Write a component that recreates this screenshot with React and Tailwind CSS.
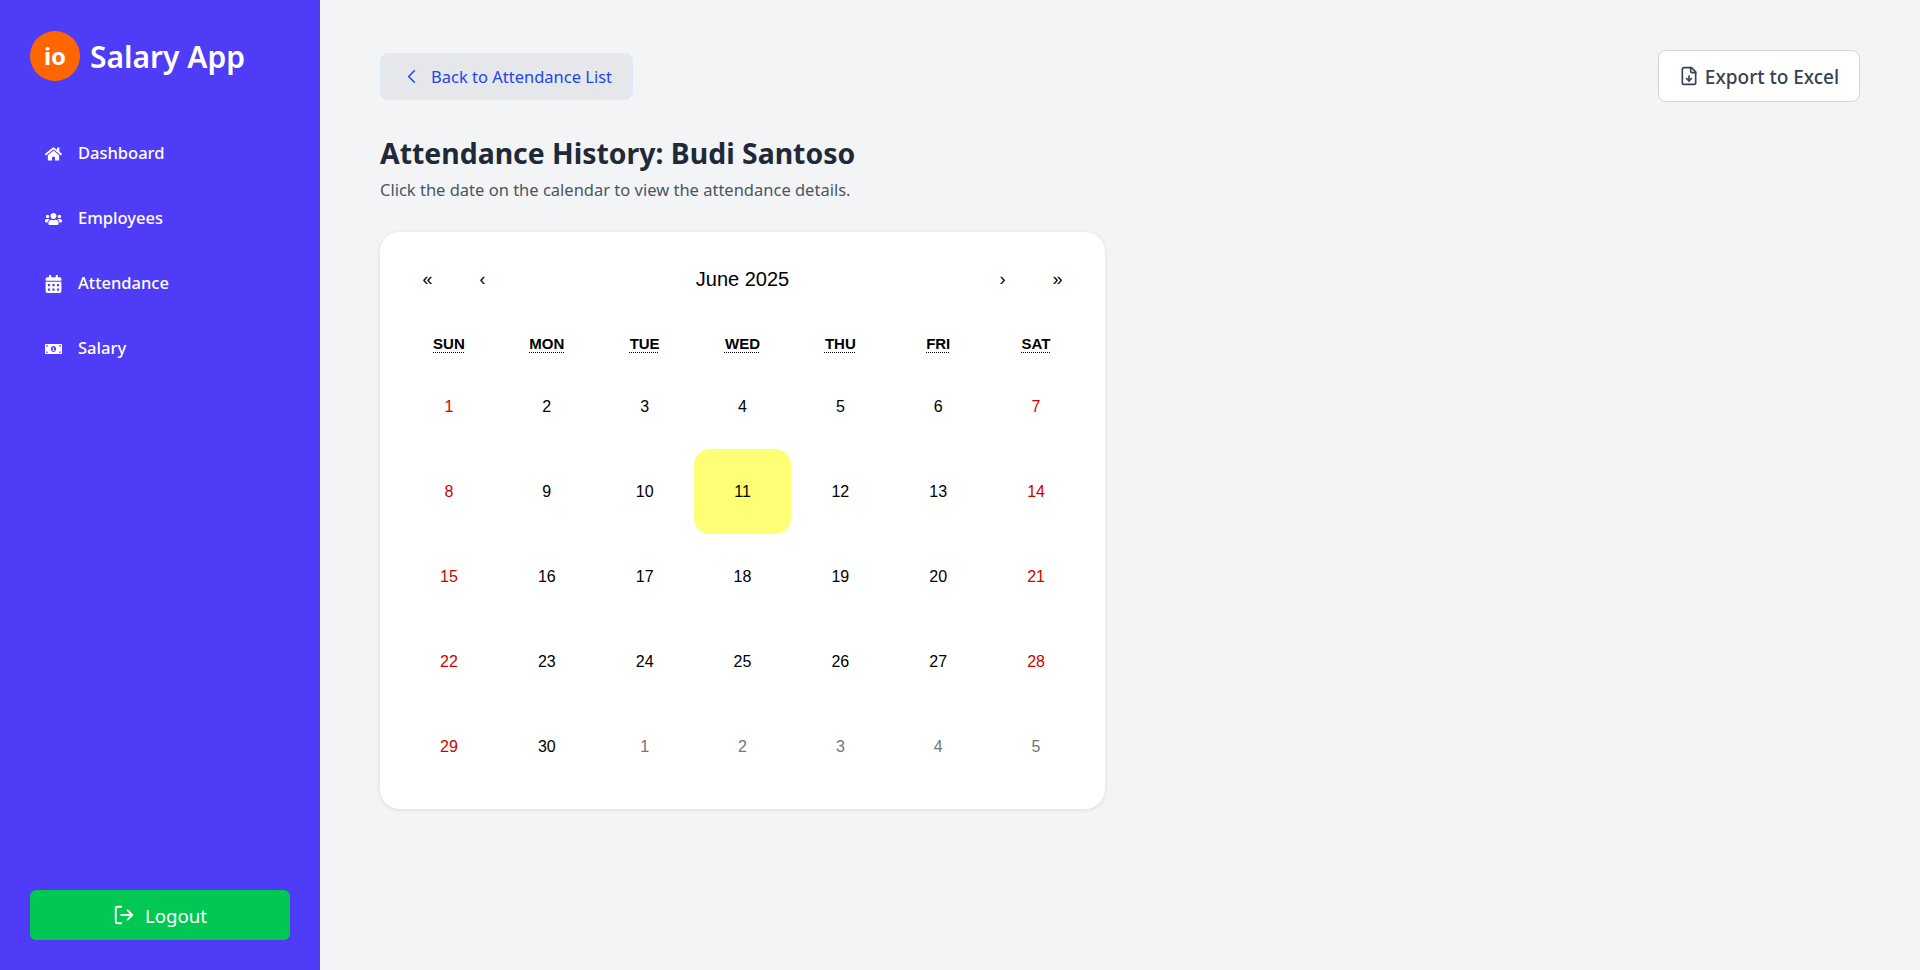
import React from "react";
import { FaHome, FaUsers, FaCalendarAlt, FaMoneyBillAlt } from "react-icons/fa";
import { FiChevronLeft, FiLogOut } from "react-icons/fi";
import { LuFileDown } from "react-icons/lu";

const nav = [
  ["Dashboard", FaHome],
  ["Employees", FaUsers],
  ["Attendance", FaCalendarAlt],
  ["Salary", FaMoneyBillAlt],
];
const weekdays = ["SUN", "MON", "TUE", "WED", "THU", "FRI", "SAT"];
const days = [];
for (let i = 1; i <= 30; i++) days.push({ d: i, out: false });
for (let i = 1; i <= 5; i++) days.push({ d: i, out: true });

function dayClass(idx, cell) {
  if (cell.out) return "text-[#757575]";
  if (idx % 7 === 0 || idx % 7 === 6) return "text-[#d10000]";
  return "text-black";
}

export default function App() {
  return (
    <div className="flex h-[970px] w-full bg-[#f3f4f6] overflow-hidden font-['Noto_Sans','Open_Sans',sans-serif]">
      <aside className="flex w-[320px] shrink-0 flex-col bg-[#4f3cf7] px-[30px] pt-[30px] pb-[30px] text-white">
        <div className="flex items-center gap-[10px]">
          <div className="flex h-[50px] w-[50px] items-center justify-center rounded-full bg-[#ff6600] text-[24px] font-bold">io</div>
          <div className="pt-[2px] text-[30px] font-semibold leading-[50px]">Salary App</div>
        </div>
        <nav className="mt-[39px] flex flex-col">
          {nav.map(([label, Icon]) => (
            <div key={label} className="flex h-[65px] items-center gap-[16px] pl-[15px] text-[16.5px] font-medium">
              <span className="flex w-[17px] justify-center"><Icon size={18} /></span>
              <span>{label}</span>
            </div>
          ))}
        </nav>
        <button className="mt-auto flex h-[50px] w-full items-center justify-center gap-[10px] rounded-[6px] bg-[#00c853] text-[18.7px] text-white">
          <FiLogOut size={22} />
          <span className="pt-[2px]">Logout</span>
        </button>
      </aside>
      <main className="flex-1 px-[60px] pt-[50px]">
        <div className="flex items-start justify-between">
          <button className="mt-[3px] flex h-[47px] w-[253px] items-center gap-[8px] rounded-[8px] border border-[#dbeafe] bg-[#e5e7eb] pl-[19px] text-[16.5px] text-[#2546e8]">
            <FiChevronLeft size={23} strokeWidth={1.6} />
            <span className="pt-[2px]">Back to Attendance List</span>
          </button>
          <button className="flex h-[52px] w-[202px] items-center justify-center gap-[6px] rounded-[8px] border border-[#d1d5db] bg-white text-[19px] font-medium text-[#374151]">
            <LuFileDown size={20} />
            <span className="pt-[2px]">Export to Excel</span>
          </button>
        </div>
        <h1 className="mt-[29px] text-[28.4px] font-bold leading-[45px] text-[#1f2937]">Attendance History: Budi Santoso</h1>
        <p className="mt-[2px] text-[16.5px] leading-[24px] text-[#4b5563]">Click the date on the calendar to view the attendance details.</p>
        <section className="mt-[30px] w-[725px] rounded-[20px] bg-white px-[20px] pt-[20px] pb-[20px] shadow-[0_1px_4px_rgba(0,0,0,0.1)] font-['Liberation_Sans',Arial,sans-serif]">
          <div className="flex h-[54px] items-center text-black">
            <button className="w-[55px] text-[18px]">«</button>
            <button className="w-[55px] text-[18px]">‹</button>
            <div className="flex-1 text-center text-[20px]">June 2025</div>
            <button className="w-[55px] text-[18px]">›</button>
            <button className="w-[55px] text-[18px]">»</button>
          </div>
          <div className="mt-[18px] grid grid-cols-7">
            {weekdays.map((w) => (
              <div key={w} className="flex h-[40px] items-center justify-center text-[15px] font-bold text-black">
                <abbr title={w} className="underline decoration-dotted decoration-1 underline-offset-[3px]">{w}</abbr>
              </div>
            ))}
          </div>
          <div className="grid grid-cols-7">
            {days.map((c, i) => (
              <div key={i} className={`flex h-[85px] items-center justify-center text-[16px] ${c.d === 11 && !c.out ? "rounded-[16px] bg-[#ffff76]" : ""} ${dayClass(i, c)}`}>
                {c.d}
              </div>
            ))}
          </div>
        </section>
      </main>
    </div>
  );
}
